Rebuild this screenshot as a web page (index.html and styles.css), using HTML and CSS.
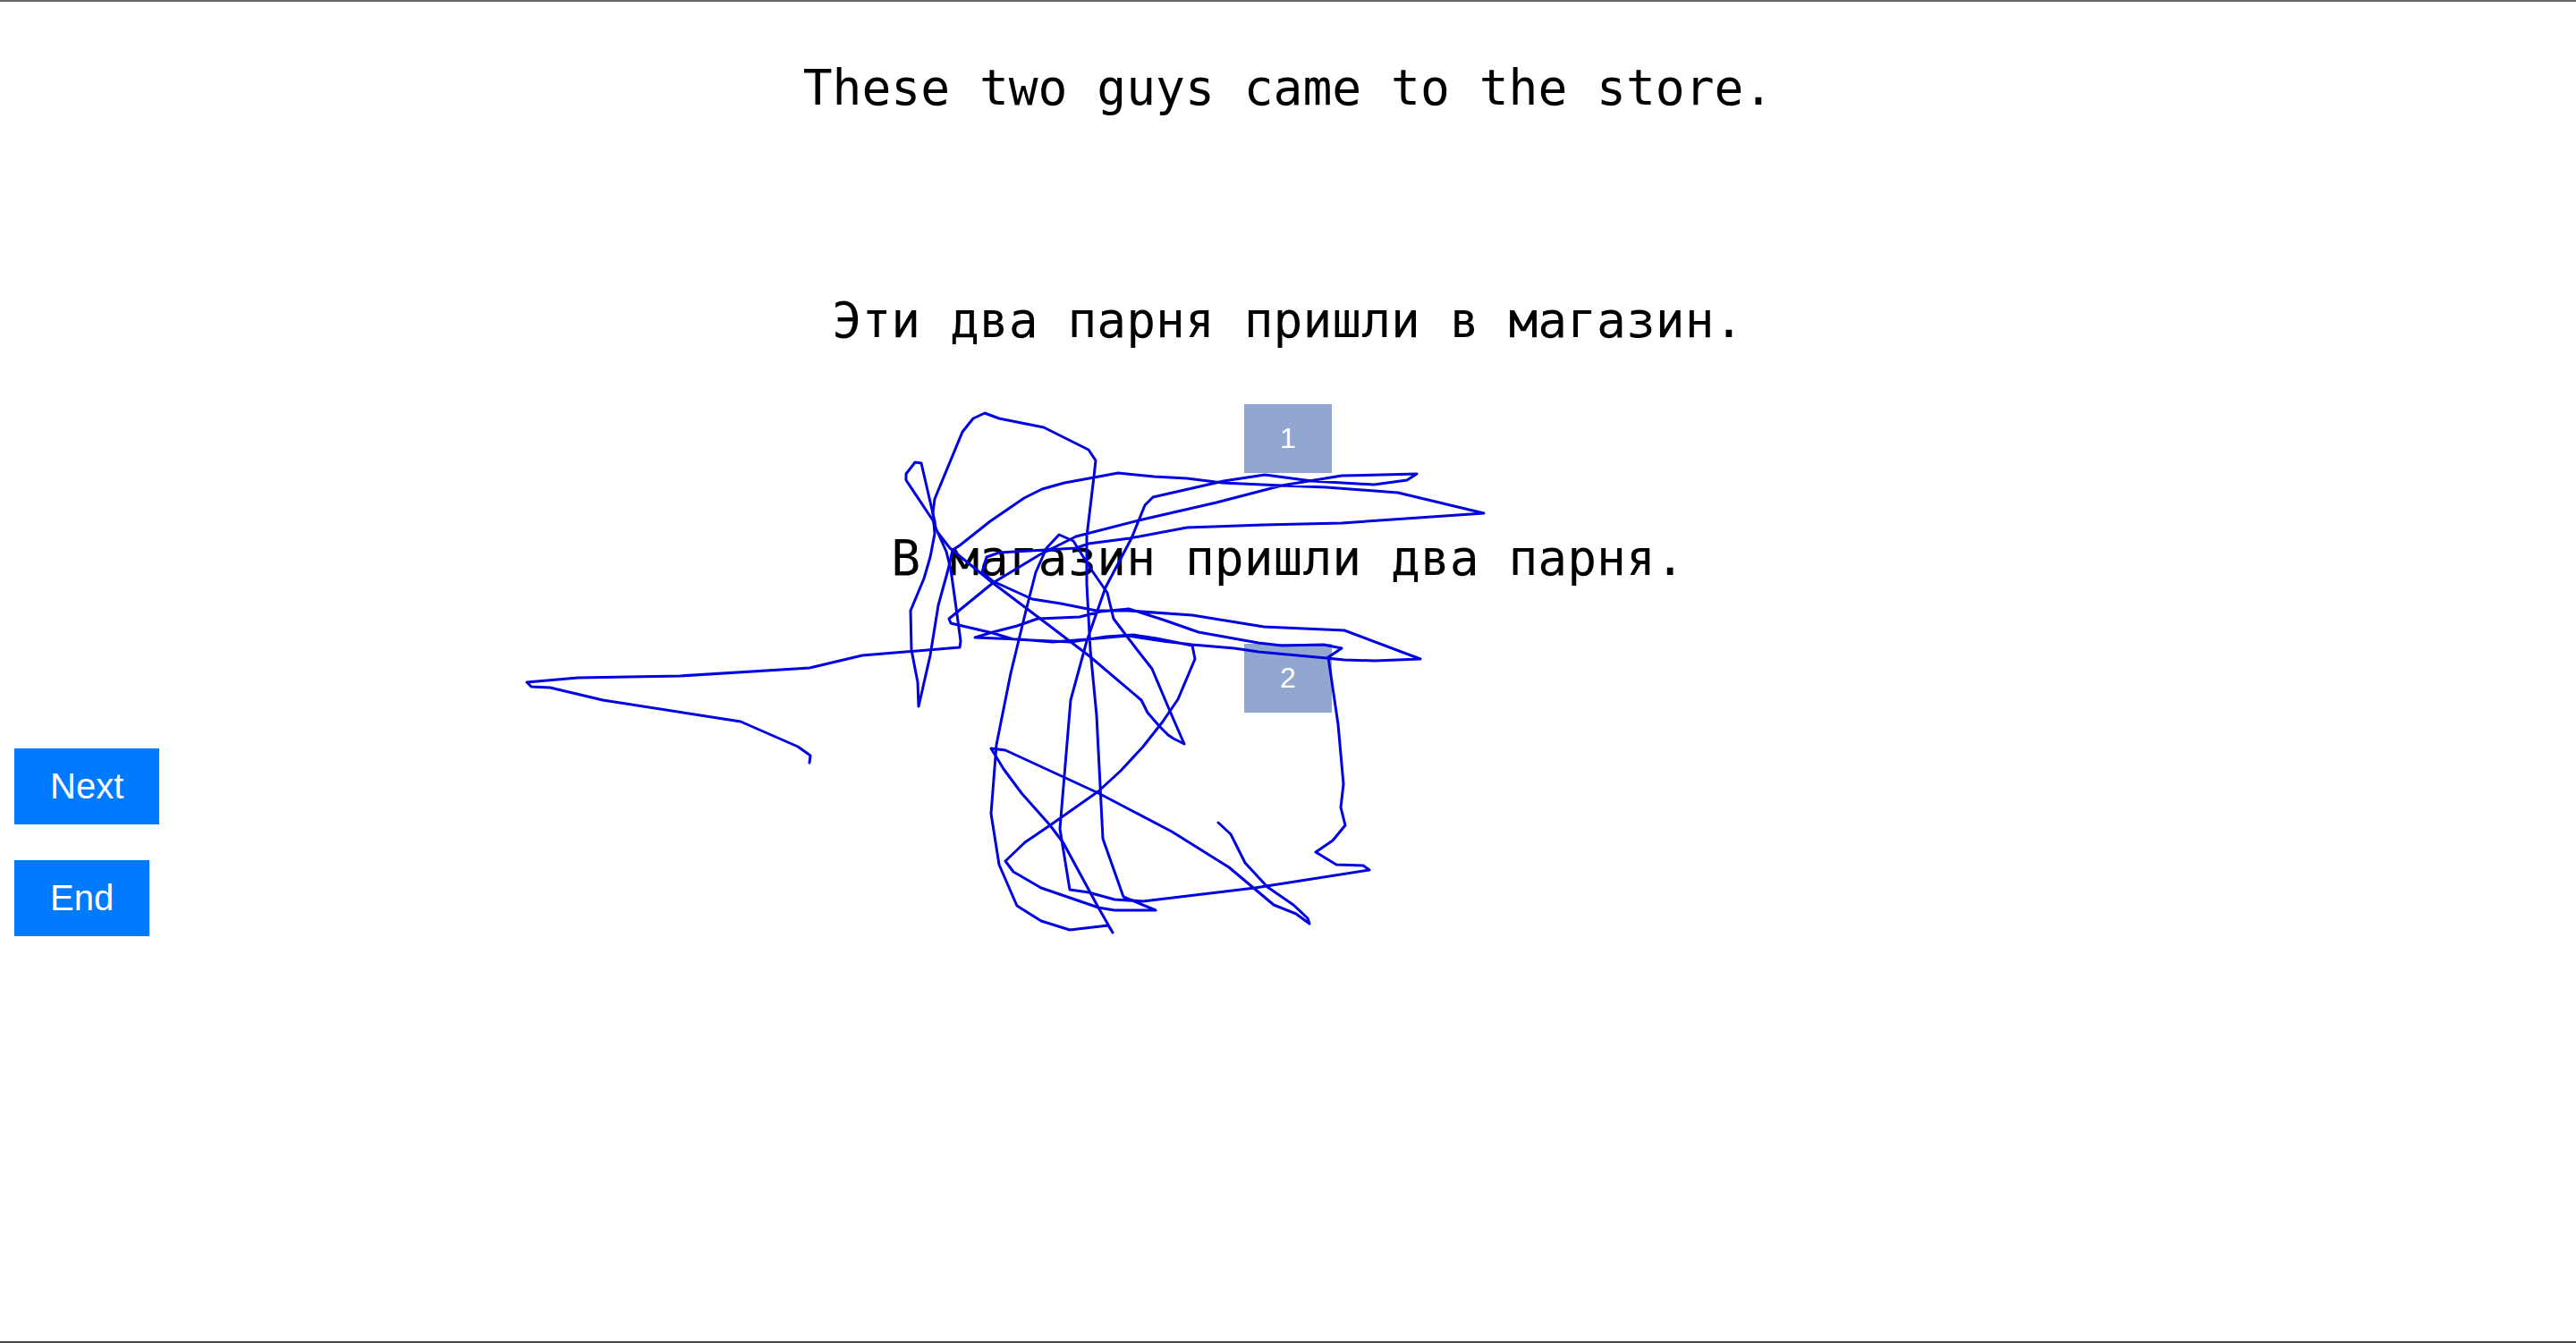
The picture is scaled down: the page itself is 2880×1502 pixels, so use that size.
FILE: index.html
```html
<!DOCTYPE html>
<html lang="en">
    <head>
        <meta charset="utf-8">
        <title>Sentence drill</title>
        <link rel="stylesheet" href="styles.css">
    </head>
    <body>
        <main>
            <div class="sentence sentence-source">These two guys came to the store.</div>
            <div class="sentence sentence-target">Эти два парня пришли в магазин.</div>
            <div class="marker marker-top">1</div>
            <div class="sentence sentence-middle">В магазин пришли два парня.</div>
            <div class="marker marker-bottom">2</div>
            <div class="actions">
                <button class="action">Next</button>
                <button class="action">End</button>
            </div>
        </main>

        <!-- Pen strokes drawn over the page -->
        <svg class="ink" width="2880" height="1400" viewBox="0 0 2880 1400">
            <polyline points="905,853 906,845 892,835 828,807 674,783 615,769 594,768 589,763 646,758 760,756 905,747 964,733 1073,724 1074,717 1069,680 1063,637 1058,617 1046,590 1045,583 1030,518 1023,517 1013,530 1013,537 1043,582 1048,595 1062,613 1110,652 1163,692 1217,733 1276,783 1283,797 1296,812 1306,822 1312,826 1324,832 1307,793 1288,748 1270,725 1245,692 1238,663 1220,637 1200,605 1184,598 1170,613 1158,640 1147,683 1130,753 1114,833 1108,910 1117,967 1130,997 1137,1013 1164,1030 1196,1040 1239,1035 1244,1043 1228,1015 1189,943 1174,923 1142,887 1122,860 1108,837 1124,839 1228,887 1310,930 1374,970 1424,1012 1449,1022 1464,1033 1462,1027 1446,1012 1417,992 1392,965 1376,933 1362,920"/>
            <polyline points="1027,790 1040,733 1049,677 1060,637 1065,615 1073,610 1107,583 1145,557 1165,547 1190,540 1223,534 1250,529 1290,533 1327,535 1367,540 1433,543 1483,545 1563,551 1659,574 1500,585 1413,587 1327,590 1263,602 1217,608 1203,613 1117,618 1103,623 1098,640 1110,650 1154,670 1186,675 1226,683 1261,683 1333,688 1413,701 1503,705 1588,737 1537,739 1503,738 1483,736 1407,729 1380,725 1333,721 1300,717 1261,711 1215,715 1177,718 1140,715 1090,713 1110,707 1137,700 1160,692 1207,690 1230,684 1262,681 1300,693 1340,707 1407,719 1433,722 1480,721 1500,725 1485,735 1496,810 1502,877 1499,903 1504,923 1490,940 1471,953 1494,967 1524,968 1531,973 1403,993 1278,1008 1246,1006 1217,998 1196,995 1185,927 1197,783 1215,717 1236,657 1265,602 1280,565 1289,556 1368,538 1414,531 1467,538 1536,542 1573,537 1584,530 1500,532 1433,543 1360,562 1273,582 1203,600 1163,620 1110,652 1061,692 1063,697 1110,708 1133,715 1197,718 1237,712 1267,710 1293,714 1333,722 1336,737 1317,782 1300,807 1278,835 1253,862 1228,885 1174,923 1146,942 1124,963 1133,975 1164,993 1228,1015 1246,1018 1292,1018 1256,1003 1233,938 1226,800 1219,727 1215,653 1215,600 1223,533 1225,515 1217,503 1167,478 1117,468 1101,462 1088,468 1076,483 1045,558 1043,573 1045,597 1040,623 1033,647 1018,683 1019,727 1026,763 1027,790"/>
        </svg>
    </body>
</html>
```

FILE: styles.css
```css
html {
    background-color: #fff;
    color: #000;
    height: 100%;
}

body {
    margin: 0;
    height: 100%;
    box-sizing: border-box;
    border-top: 2px solid #666;
    border-bottom: 2px solid #444;
}

main {
    display: flex;
    flex-direction: column;
    padding-top: 56px;
}

.sentence {
    font-family: "DejaVu Sans Mono", monospace;
    font-size: 54.6px;
    line-height: 80px;
    text-align: center;
}

.sentence-target {
    margin-top: 180px;
}

.sentence-middle {
    margin-top: 55px;
}

.marker {
    align-self: center;
    width: 98px;
    height: 77px;
    line-height: 77px;
    background-color: #92a7cf;
    color: #fff;
    font-family: "Liberation Sans", sans-serif;
    font-size: 32px;
    text-align: center;
}

.marker-top {
    margin-top: 54px;
}

.marker-bottom {
    margin-top: 56px;
}

.actions {
    display: flex;
    flex-direction: column;
    align-items: flex-start;
    gap: 40px;
    margin: 40px 0 0 16px;
}

.action {
    height: 85px;
    padding: 0 40px;
    border: 0;
    background-color: #007bff;
    color: #fff;
    font-family: "Liberation Sans", sans-serif;
    font-size: 40px;
}

.ink {
    position: absolute;
    top: 0;
    left: 0;
    pointer-events: none;
}

.ink polyline {
    fill: none;
    stroke: #0000e0;
    stroke-width: 3;
    stroke-linejoin: round;
    stroke-linecap: round;
}
```
